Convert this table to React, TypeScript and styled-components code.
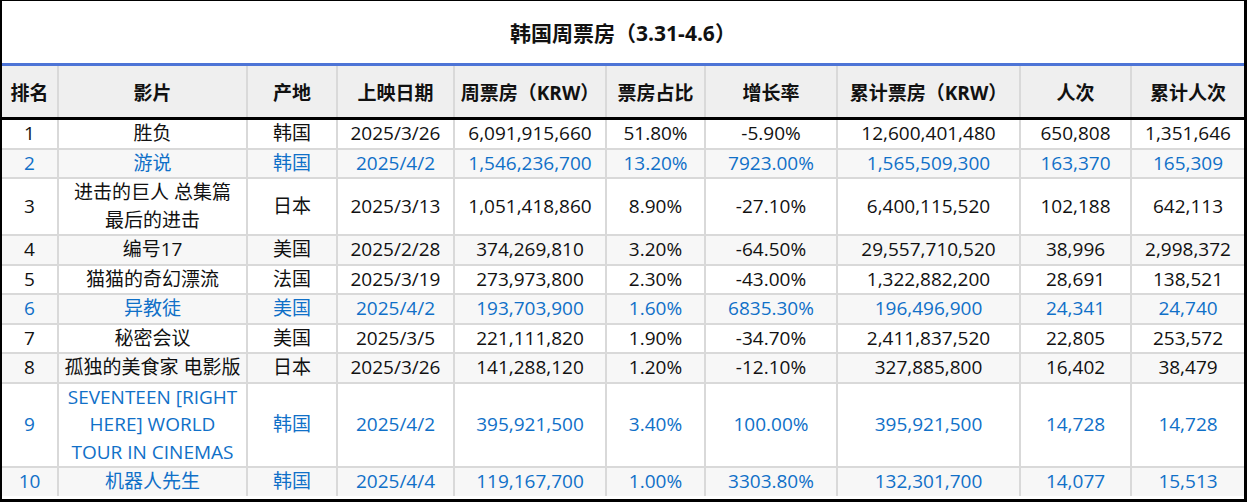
import React from "react";
import styled, { createGlobalStyle } from "styled-components";

const GlobalStyle = createGlobalStyle`
    html, body {
        margin: 0;
        padding: 0;
        background: #ffffff;
    }
    body {
        font-family: "Open Sans", "Noto Sans CJK SC", sans-serif;
        color: #111111;
    }
`;

const Board = styled.div`
    width: 1247px;
    height: 502px;
    box-sizing: border-box;
    border-top: 1px solid #000;
    border-left: 2px solid #000;
    border-right: 3px solid #000;
    border-bottom: 3px solid #000;
    overflow: hidden;
    background: #fff;
`;

const Title = styled.div`
    height: 62px;
    display: flex;
    align-items: center;
    justify-content: center;
    border-bottom: 3px solid #4d74d6;
    font-size: 21px;
    font-weight: 700;
    color: #111;
`;

const Table = styled.table`
    width: 1242px;
    table-layout: fixed;
    border-collapse: collapse;
    font-size: 19px;
`;

const HeadRow = styled.tr`
    background: #efefef;
    border-bottom: 3px solid #000;
`;

const HeadCell = styled.th`
    height: 51px;
    padding: 0 2px;
    text-align: center;
    vertical-align: middle;
    font-weight: 700;
    color: #111;
    border-left: 2px solid #d9d9d9;
    white-space: nowrap;

    &:first-child {
        border-left: none;
    }
`;

const Row = styled.tr<{ $alt: boolean }>`
    background: ${({ $alt }) => ($alt ? "#f7f7f7" : "#ffffff")};
    border-bottom: 2px solid #d9d9d9;

    &:last-child {
        border-bottom: none;
    }
`;

const Cell = styled.td<{ $blue: boolean }>`
    padding: 0 3px;
    line-height: 27.5px;
    text-align: center;
    vertical-align: middle;
    white-space: pre-line;
    color: ${({ $blue }) => ($blue ? "#1070c8" : "#111111")};
    border-left: 2px solid #d9d9d9;

    &:first-child {
        border-left: none;
    }
`;

const columns = [
    { label: "排名", width: 56 },
    { label: "影片", width: 189 },
    { label: "产地", width: 90 },
    { label: "上映日期", width: 117 },
    { label: "周票房（KRW）", width: 152 },
    { label: "票房占比", width: 99 },
    { label: "增长率", width: 132 },
    { label: "累计票房（KRW）", width: 183 },
    { label: "人次", width: 111 },
    { label: "累计人次", width: 113 },
];

// 新片标蓝
const films: { cells: string[]; isNew: boolean }[] = [
    { cells: ["1", "胜负", "韩国", "2025/3/26", "6,091,915,660", "51.80%", "-5.90%", "12,600,401,480", "650,808", "1,351,646"], isNew: false },
    { cells: ["2", "游说", "韩国", "2025/4/2", "1,546,236,700", "13.20%", "7923.00%", "1,565,509,300", "163,370", "165,309"], isNew: true },
    { cells: ["3", "进击的巨人 总集篇\n最后的进击", "日本", "2025/3/13", "1,051,418,860", "8.90%", "-27.10%", "6,400,115,520", "102,188", "642,113"], isNew: false },
    { cells: ["4", "编号17", "美国", "2025/2/28", "374,269,810", "3.20%", "-64.50%", "29,557,710,520", "38,996", "2,998,372"], isNew: false },
    { cells: ["5", "猫猫的奇幻漂流", "法国", "2025/3/19", "273,973,800", "2.30%", "-43.00%", "1,322,882,200", "28,691", "138,521"], isNew: false },
    { cells: ["6", "异教徒", "美国", "2025/4/2", "193,703,900", "1.60%", "6835.30%", "196,496,900", "24,341", "24,740"], isNew: true },
    { cells: ["7", "秘密会议", "美国", "2025/3/5", "221,111,820", "1.90%", "-34.70%", "2,411,837,520", "22,805", "253,572"], isNew: false },
    { cells: ["8", "孤独的美食家 电影版", "日本", "2025/3/26", "141,288,120", "1.20%", "-12.10%", "327,885,800", "16,402", "38,479"], isNew: false },
    { cells: ["9", "SEVENTEEN [RIGHT\nHERE] WORLD\nTOUR IN CINEMAS", "韩国", "2025/4/2", "395,921,500", "3.40%", "100.00%", "395,921,500", "14,728", "14,728"], isNew: true },
    { cells: ["10", "机器人先生", "韩国", "2025/4/4", "119,167,700", "1.00%", "3303.80%", "132,301,700", "14,077", "15,513"], isNew: true },
];

const App = () => {
    return (
        <>
            <GlobalStyle />
            <Board>
                <Title>韩国周票房（3.31-4.6）</Title>
                <Table>
                    <colgroup>
                        {columns.map((col) => (
                            <col key={col.label} style={{ width: col.width }} />
                        ))}
                    </colgroup>
                    <thead>
                        <HeadRow>
                            {columns.map((col) => (
                                <HeadCell key={col.label}>{col.label}</HeadCell>
                            ))}
                        </HeadRow>
                    </thead>
                    <tbody>
                        {films.map((film, idx) => (
                            <Row key={idx} $alt={idx % 2 === 1}>
                                {film.cells.map((value, i) => (
                                    <Cell key={i} $blue={film.isNew}>{value}</Cell>
                                ))}
                            </Row>
                        ))}
                    </tbody>
                </Table>
            </Board>
        </>
    );
};

export default App;
